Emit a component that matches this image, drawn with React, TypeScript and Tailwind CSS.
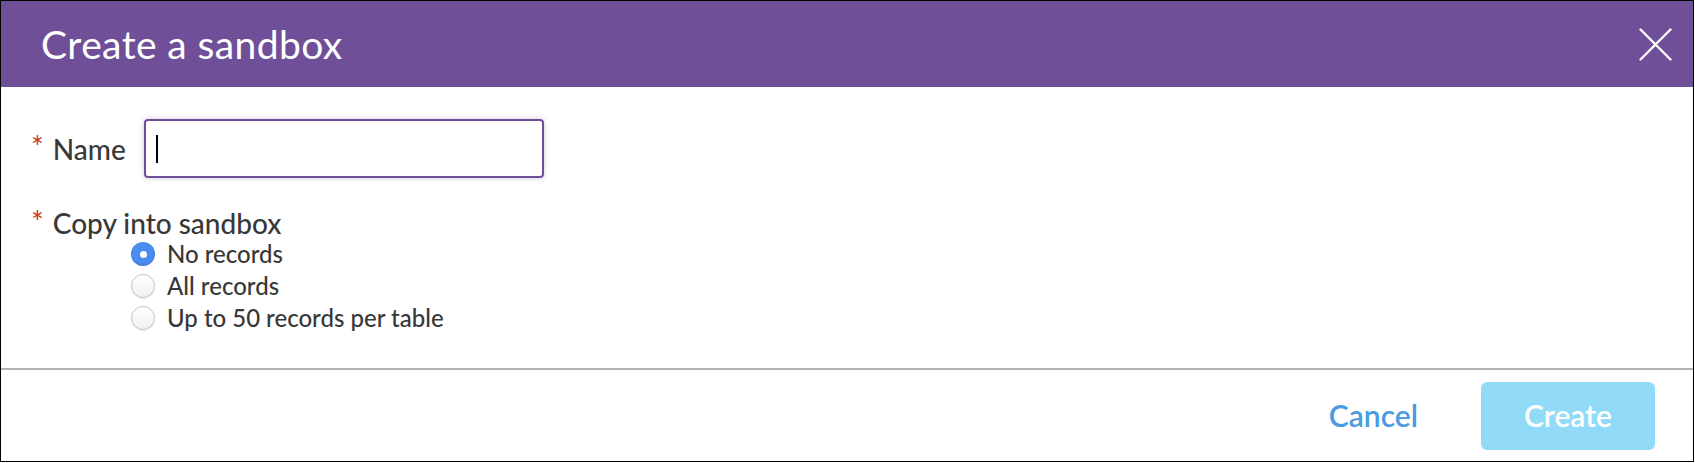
import { useState } from 'react'

const options = [
  { id: 'none', label: 'No records' },
  { id: 'all', label: 'All records' },
  { id: 'fifty', label: 'Up to 50 records per table' },
]

function Radio({ checked }: { checked: boolean }) {
  if (checked) {
    return (
      <span className="flex h-[24px] w-[24px] shrink-0 items-center justify-center rounded-full bg-[#4a8cf0] shadow-[inset_0_-1px_2px_rgba(0,0,0,0.15)]">
        <span className="h-[7px] w-[7px] rounded-full bg-white" />
      </span>
    )
  }
  return (
    <span className="h-[24px] w-[24px] shrink-0 rounded-full border border-[#c4c4c4] bg-gradient-to-b from-white to-[#f1f1f1] shadow-[0_1px_1px_rgba(0,0,0,0.08)]" />
  )
}

export default function App() {
  const [choice, setChoice] = useState('none')

  return (
    <div className="flex h-[462px] w-[1694px] flex-col border border-black bg-white font-['Lato','Open_Sans',sans-serif] text-[#383838]">
      <header className="flex h-[86px] shrink-0 items-center justify-between bg-[#6e4f98] pl-[40px] pr-[21px]">
        <h1 className="text-[39px] leading-none tracking-[0.4px] text-white">Create a sandbox</h1>
        <button className="flex h-[34px] w-[34px] items-center justify-center">
          <svg width="33" height="33" viewBox="0 0 33 33" fill="none" stroke="white" strokeWidth="2.4" strokeLinecap="round">
            <path d="M1.5 1.5 L31.5 31.5 M31.5 1.5 L1.5 31.5" />
          </svg>
        </button>
      </header>

      <main className="flex-1 pl-[30px] pt-[32px]">
        <div className="flex items-center">
          <span className="mr-[9px] mt-[-6px] text-[30px] leading-none text-[#c8391f]">*</span>
          <span className="text-[28px] font-medium">Name</span>
          <div className="ml-[18px] flex h-[59px] w-[400px] items-center rounded-[4px] border-2 border-[#6e4f98] shadow-[0_0_5px_rgba(110,79,152,0.35)]">
            <span className="ml-[10px] h-[28px] w-[2px] bg-black" />
          </div>
        </div>

        <div className="mt-[30px] flex items-center">
          <span className="mr-[9px] mt-[-6px] text-[30px] leading-none text-[#c8391f]">*</span>
          <span className="text-[28px] font-medium leading-[31px]">Copy into sandbox</span>
        </div>

        <div className="ml-[100px] mt-[-1px] flex flex-col">
          {options.map((o) => (
            <label key={o.id} className="flex h-[32px] cursor-pointer items-center gap-[12px]" onClick={() => setChoice(o.id)}>
              <Radio checked={choice === o.id} />
              <span className="text-[24px] font-medium leading-none">{o.label}</span>
            </label>
          ))}
        </div>
      </main>

      <div className="flex h-[93px] shrink-0 items-center justify-end border-t-2 border-[#b4b4b4] pr-[38px]">
        <button className="mr-[63px] text-[30px] font-semibold text-[#4a9be2]">Cancel</button>
        <button className="h-[68px] w-[174px] rounded-[6px] bg-[#91dbf9] text-[30px] font-semibold text-white">Create</button>
      </div>
    </div>
  )
}
